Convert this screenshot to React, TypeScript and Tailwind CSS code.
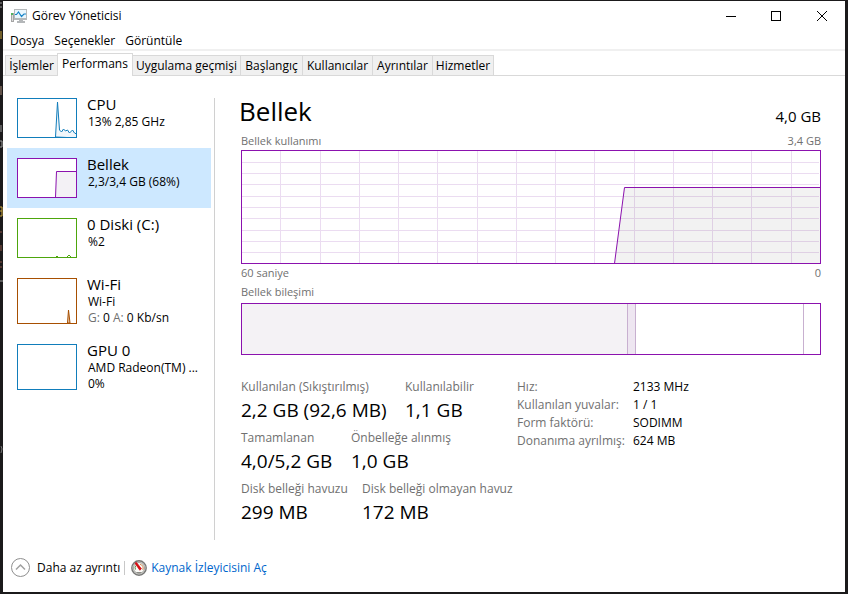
import clsx from 'clsx'
import type { ReactNode } from 'react'

const tabs = [
  { label: 'İşlemler', width: 'w-[52px]' },
  { label: 'Performans', width: 'w-[76px]' },
  { label: 'Uygulama geçmişi', width: 'w-[108px]' },
  { label: 'Başlangıç', width: 'w-[62px]' },
  { label: 'Kullanıcılar', width: 'w-[70px]' },
  { label: 'Ayrıntılar', width: 'w-[60px]' },
  { label: 'Hizmetler', width: 'w-[61px]' },
]

const stats = [
  [
    { label: 'Kullanılan (Sıkıştırılmış)', value: '2,2 GB (92,6 MB)', width: 'w-[164px]' },
    { label: 'Kullanılabilir', value: '1,1 GB', width: 'w-[112px]' },
  ],
  [
    { label: 'Tamamlanan', value: '4,0/5,2 GB', width: 'w-[110px]' },
    { label: 'Önbelleğe alınmış', value: '1,0 GB', width: 'w-[166px]' },
  ],
  [
    { label: 'Disk belleği havuzu', value: '299 MB', width: 'w-[121px]' },
    { label: 'Disk belleği olmayan havuz', value: '172 MB', width: 'w-[155px]' },
  ],
]

const specs = [
  ['Hız:', '2133 MHz'],
  ['Kullanılan yuvalar:', '1 / 1'],
  ['Form faktörü:', 'SODIMM'],
  ['Donanıma ayrılmış:', '624 MB'],
]

const gridX = [39, 79, 118, 157, 196, 236, 275, 314, 353, 393, 432, 471, 510, 550]
const gridY = [12, 23, 34, 46, 57, 68, 80, 91, 102]

function AppIcon() {
  return (
    <svg width="16" height="14" viewBox="0 0 16 14" aria-hidden="true">
      <rect x="0" y="4" width="3" height="9" fill="#a5a5a5" />
      <rect x="1" y="5" width="1" height="7" fill="#dcdcdc" />
      <rect x="0" y="4" width="2" height="2" fill="#4fb45a" />
      <rect x="3" y="0" width="13" height="11" fill="#b4b8ba" />
      <rect x="4" y="1" width="11" height="8" fill="#e9f6fd" />
      <path d="M4 5.5h1.500L7.500 3l3 4.500L13 5h2" fill="none" stroke="#1583c7" strokeWidth="1.2" />
      <path d="M8 11h4v1h2v2H6v-2h2z" fill="#b4b7b9" />
    </svg>
  )
}

function GaugeIcon() {
  return (
    <svg width="16" height="16" viewBox="0 0 16 16" aria-hidden="true">
      <circle cx="8" cy="8" r="7.2" fill="#d9d9d7" stroke="#777775" strokeWidth="1.4" />
      <circle cx="8" cy="8" r="5.5" fill="#fbfbf7" stroke="#a3a39d" strokeWidth="1" />
      <path d="M4.500 9.500a4 4 0 0 1 .3-4" fill="none" stroke="#5c8f50" />
      <path d="M9 4.200a4 4 0 0 1 2.800 5.600" fill="none" stroke="#cf8a54" />
      <path d="M4 3.200l1.400-.8 5 6.400-1.600 1.400z" fill="#d60b12" stroke="#d60b12" strokeWidth="0.8" />
      <path d="M5.500 12.500h5" stroke="#8d8d88" />
    </svg>
  )
}

// Slivers of the editor window that sits behind the left edge.
function EdgeMarks() {
  return (
    <svg className="absolute left-0 top-0" width="3" height="594" aria-hidden="true">
      <path d="M0 3h2M0 7h2M1 125v7M0 141h2v6H0M0 281h3" fill="none" stroke="#999" />
      <path d="M1 31v8M0 207h2v9H0M0 211h2" fill="none" stroke="#c9a53b" />
      <path d="M1 86v9" stroke="#a88a78" />
      <path d="M0 232h2M1 245v6M0 262h2M0 267h2" stroke="#8a5548" />
      <path d="M1 446l1 3-1 4" fill="none" stroke="#777" />
    </svg>
  )
}

function Thumb({ color, tall, children }: { color: string; tall?: boolean; children?: ReactNode }) {
  return (
    <svg
      className="shrink-0 bg-white"
      width="60"
      height={tall ? 46 : 40}
      fill="none"
      stroke={color}
      aria-hidden="true"
    >
      {children}
      <rect x="0.5" y="0.5" width="59" height={tall ? 45 : 39} />
    </svg>
  )
}

interface SideItemProps {
  name: string
  active?: boolean
  tall?: boolean
  thumb: ReactNode
  children: ReactNode
}

function SideItem({ name, active, tall, thumb, children }: SideItemProps) {
  return (
    <button
      type="button"
      aria-pressed={!!active}
      className={clsx(
        'flex w-full items-start gap-2.5 px-2.5 pt-2.5 text-left',
        tall ? 'h-[66px]' : 'h-[60px]',
        active && 'bg-[#cde8ff]'
      )}
    >
      {thumb}
      <span className="-mt-1 flex min-w-0 flex-col whitespace-nowrap">
        <span className="text-[15px] leading-5">{name}</span>
        <span className="flex flex-col pl-px text-[12px] leading-4">{children}</span>
      </span>
    </button>
  )
}

function TitleBar() {
  return (
    <header className="flex h-[30px] items-center pl-2">
      <AppIcon />
      <h1 className="grow pl-[5px] text-[12px]">Görev Yöneticisi</h1>
      <button type="button" aria-label="Simge durumuna küçült" className="flex h-full w-11 items-center justify-center">
        <svg width="10" height="10"><path d="M0 5.5h10" stroke="#000" /></svg>
      </button>
      <button type="button" aria-label="Ekranı kapla" className="flex h-full w-[46px] items-center justify-center">
        <svg width="10" height="10"><rect x="0.5" y="0.5" width="9" height="9" fill="none" stroke="#000" /></svg>
      </button>
      <button type="button" aria-label="Kapat" className="flex h-full w-[46px] items-center justify-center">
        <svg width="10" height="10"><path d="M0 0l10 10M10 0L0 10" stroke="#000" /></svg>
      </button>
    </header>
  )
}

function Sidebar() {
  return (
    <aside className="w-[204px] shrink-0">
      <SideItem
        name="CPU"
        thumb={
          <Thumb color="#117dbb">
            <path d="M38.500 39L40.500 4l2 28 2 2 2-3 2 2 2-1 2 3 3-3 2 3 2 1h2v4z" fill="#f1f6fa" />
          </Thumb>
        }
      >
        <span>13% 2,85 GHz</span>
      </SideItem>
      <SideItem
        name="Bellek"
        active
        thumb={
          <Thumb color="#8b12ae">
            <path d="M38.500 39.500L39.500 13.500H60V39.500z" fill="#f3f1f5" />
          </Thumb>
        }
      >
        <span>2,3/3,4 GB (68%)</span>
      </SideItem>
      <SideItem
        name="0 Diski (C:)"
        thumb={
          <Thumb color="#4da60c">
            <path d="M39 39l1-1 1 1M50 39l2-2 2 2" />
          </Thumb>
        }
      >
        <span>%2</span>
      </SideItem>
      <SideItem
        name="Wi-Fi"
        tall
        thumb={
          <Thumb color="#a74f01" tall>
            <path d="M50.500 45l1-13 1.500 13z" fill="#e9c9ad" />
          </Thumb>
        }
      >
        <span>Wi-Fi</span>
        <span>
          <span className="text-[#707070]">G:</span> 0 <span className="text-[#707070]">A:</span> 0 Kb/sn
        </span>
      </SideItem>
      <SideItem name="GPU 0" tall thumb={<Thumb color="#117dbb" tall />}>
        <span>AMD Radeon(TM) ...</span>
        <span>0%</span>
      </SideItem>
    </aside>
  )
}

function UsageChart() {
  return (
    <svg
      className="mt-px block h-[114px] w-full"
      viewBox="0 0 580 114"
      preserveAspectRatio="none"
      role="img"
      aria-label="Bellek kullanımı"
    >
      <g stroke="#ebdcf1" shapeRendering="crispEdges">
        {gridX.map((x) => (
          <line key={x} x1={x + 0.5} y1="1" x2={x + 0.5} y2="113" />
        ))}
        {gridY.map((y) => (
          <line key={y} x1="1" y1={y + 0.5} x2="578" y2={y + 0.5} />
        ))}
      </g>
      <path d="M373.500 113.500L383.500 37.500H580V113.500z" fill="#000" fillOpacity="0.05" />
      <path d="M373.500 113.500L383.500 37.500H580" fill="none" stroke="#8b12ae" />
      <rect x="0.5" y="0.5" width="579" height="113" fill="none" stroke="#8b12ae" />
    </svg>
  )
}

function Composition() {
  return (
    <div className="mt-0.5 flex h-[52px] border border-[#8b12ae]">
      <div className="w-2/3 bg-[#f4f2f5]" />
      <div className="w-[9px] border-x border-[#c8b0d0] bg-[#eee6f1]" />
      <div className="grow" />
      <div className="w-[17px] border-l border-[#c8b0d0]" />
    </div>
  )
}

function MemoryPanel() {
  return (
    <section className="min-w-0 grow pl-[26px] pr-6">
      <div className="flex h-[45px] items-end justify-between">
        <h2 className="-ml-0.5 text-[26px] leading-[44px]">Bellek</h2>
        <span className="text-[15px] leading-[34px]">4,0 GB</span>
      </div>
      <div className="flex justify-between text-[11px] leading-4 text-[#707070]">
        <span>Bellek kullanımı</span>
        <span>3,4 GB</span>
      </div>
      <UsageChart />
      <div className="flex justify-between text-[11px] leading-[18px] text-[#707070]">
        <span>60 saniye</span>
        <span>0</span>
      </div>
      <h3 className="text-[11px] leading-[19px] text-[#707070]">Bellek bileşimi</h3>
      <Composition />
      <div className="flex pt-[23px]">
        <div className="flex w-[276px] flex-col gap-[5px] whitespace-nowrap">
          {stats.map((row, i) => (
            <dl key={i} className="flex">
              {row.map((stat) => (
                <div key={stat.label} className={stat.width}>
                  <dt className="text-[12px] leading-[18px] text-[#707070]">{stat.label}</dt>
                  <dd className="text-[19px] leading-7">{stat.value}</dd>
                </div>
              ))}
            </dl>
          ))}
        </div>
        <dl className="grid grid-cols-[116px_auto] content-start whitespace-nowrap text-[12px] leading-[18px]">
          {specs.map(([label, value]) => (
            <div key={label} className="contents">
              <dt className="text-[#707070]">{label}</dt>
              <dd>{value}</dd>
            </div>
          ))}
        </dl>
      </div>
    </section>
  )
}

export default function App() {
  return (
    <div className="relative flex min-h-screen flex-col bg-[#1b1a1b] pb-0.5 pl-[3px] pr-[3px] pt-px font-['Open_Sans','Noto_Sans',sans-serif] text-black">
      <EdgeMarks />
      <div className="flex grow flex-col bg-white">
        <TitleBar />
        <nav className="flex h-5 items-center gap-2.5 border-b-2 border-[#f0f0f0] pl-[7px] pt-0.5 text-[12px]">
          <button type="button">Dosya</button>
          <button type="button">Seçenekler</button>
          <button type="button">Görüntüle</button>
        </nav>
        <div role="tablist" className="flex h-[25px] items-end border-b border-[#d9d9d9] pl-0.5 text-[12px]">
          {tabs.map((tab, i) => (
            <button
              key={tab.label}
              type="button"
              role="tab"
              aria-selected={i === 1}
              className={clsx(
                'whitespace-nowrap border-t border-[#d9d9d9] text-center',
                tab.width,
                i === 1 ? '-mb-px h-[23px] border-x bg-white pb-0.5' : 'h-5 bg-[#f0f0f0]',
                i === 0 && 'border-l',
                i > 1 && 'border-r'
              )}
            >
              {tab.label}
            </button>
          ))}
        </div>
        <main className="flex grow pl-1 pt-3">
          <Sidebar />
          <div className="ml-[3px] mt-2.5 w-px shrink-0 bg-[#d0d0d0]" />
          <MemoryPanel />
        </main>
        <footer className="flex h-[52px] items-center pl-2 pt-[3px] text-[12px]">
          <button type="button" className="flex items-center gap-[7px]">
            <svg width="19" height="19" viewBox="0 0 19 19" fill="none" aria-hidden="true">
              <circle cx="9.5" cy="9.5" r="9" stroke="#8f8f8f" />
              <path d="M5 11.500l4.500-4.500 4.500 4.500" stroke="#a0a0a0" strokeWidth="1.5" />
            </svg>
            Daha az ayrıntı
          </button>
          <div className="mx-1 h-3.5 w-px bg-[#c8c8c8]" />
          <a href="#" className="flex items-center gap-1 pl-0.5 text-[#0066cc]">
            <GaugeIcon />
            Kaynak İzleyicisini Aç
          </a>
        </footer>
      </div>
    </div>
  )
}
